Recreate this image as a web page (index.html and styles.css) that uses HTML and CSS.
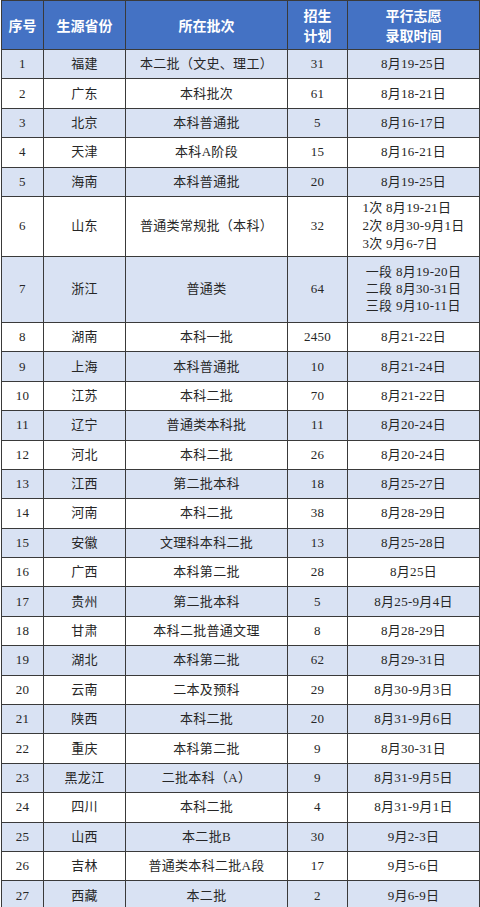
FILE: index.html
```html
<!DOCTYPE html>
<html lang="zh-CN">
<head>
<meta charset="utf-8">
<title>平行志愿录取时间</title>
<link rel="stylesheet" href="styles.css">
</head>
<body>
<table class="plan">
  <colgroup>
    <col class="c-no"><col class="c-prov"><col class="c-batch"><col class="c-num"><col class="c-time">
  </colgroup>
  <thead>
    <tr class="head">
      <th>序号</th><th>生源省份</th><th>所在批次</th><th>招生<br>计划</th><th>平行志愿<br>录取时间</th>
    </tr>
  </thead>
  <tbody>
    <tr class="alt"><td>1</td><td>福建</td><td>本二批（文史、理工）</td><td>31</td><td>8月19-25日</td></tr>
    <tr><td>2</td><td>广东</td><td>本科批次</td><td>61</td><td>8月18-21日</td></tr>
    <tr class="alt"><td>3</td><td>北京</td><td>本科普通批</td><td>5</td><td>8月16-17日</td></tr>
    <tr><td>4</td><td>天津</td><td>本科A阶段</td><td>15</td><td>8月16-21日</td></tr>
    <tr class="alt"><td>5</td><td>海南</td><td>本科普通批</td><td>20</td><td>8月19-25日</td></tr>
    <tr class="tall6"><td>6</td><td>山东</td><td>普通类常规批（本科）</td><td>32</td><td><span class="multi">1次 8月19-21日<br>2次 8月30-9月1日<br>3次 9月6-7日</span></td></tr>
    <tr class="alt tall7"><td>7</td><td>浙江</td><td>普通类</td><td>64</td><td><span class="multi">一段 8月19-20日<br>二段 8月30-31日<br>三段 9月10-11日</span></td></tr>
    <tr><td>8</td><td>湖南</td><td>本科一批</td><td>2450</td><td>8月21-22日</td></tr>
    <tr class="alt"><td>9</td><td>上海</td><td>本科普通批</td><td>10</td><td>8月21-24日</td></tr>
    <tr><td>10</td><td>江苏</td><td>本科二批</td><td>70</td><td>8月21-22日</td></tr>
    <tr class="alt"><td>11</td><td>辽宁</td><td>普通类本科批</td><td>11</td><td>8月20-24日</td></tr>
    <tr><td>12</td><td>河北</td><td>本科二批</td><td>26</td><td>8月20-24日</td></tr>
    <tr class="alt"><td>13</td><td>江西</td><td>第二批本科</td><td>18</td><td>8月25-27日</td></tr>
    <tr><td>14</td><td>河南</td><td>本科二批</td><td>38</td><td>8月28-29日</td></tr>
    <tr class="alt"><td>15</td><td>安徽</td><td>文理科本科二批</td><td>13</td><td>8月25-28日</td></tr>
    <tr><td>16</td><td>广西</td><td>本科第二批</td><td>28</td><td>8月25日</td></tr>
    <tr class="alt"><td>17</td><td>贵州</td><td>第二批本科</td><td>5</td><td>8月25-9月4日</td></tr>
    <tr><td>18</td><td>甘肃</td><td>本科二批普通文理</td><td>8</td><td>8月28-29日</td></tr>
    <tr class="alt"><td>19</td><td>湖北</td><td>本科第二批</td><td>62</td><td>8月29-31日</td></tr>
    <tr><td>20</td><td>云南</td><td>二本及预科</td><td>29</td><td>8月30-9月3日</td></tr>
    <tr class="alt"><td>21</td><td>陕西</td><td>本科二批</td><td>20</td><td>8月31-9月6日</td></tr>
    <tr><td>22</td><td>重庆</td><td>本科第二批</td><td>9</td><td>8月30-31日</td></tr>
    <tr class="alt"><td>23</td><td>黑龙江</td><td>二批本科（A）</td><td>9</td><td>8月31-9月5日</td></tr>
    <tr><td>24</td><td>四川</td><td>本科二批</td><td>4</td><td>8月31-9月1日</td></tr>
    <tr class="alt"><td>25</td><td>山西</td><td>本二批B</td><td>30</td><td>9月2-3日</td></tr>
    <tr><td>26</td><td>吉林</td><td>普通类本科二批A段</td><td>17</td><td>9月5-6日</td></tr>
    <tr class="alt"><td>27</td><td>西藏</td><td>本二批</td><td>2</td><td>9月6-9日</td></tr>
  </tbody>
</table>
</body>
</html>
```
FILE: styles.css
```css
html, body {
  margin: 0;
  padding: 0;
  background: #ffffff;
}
body {
  padding-left: 1px;
  overflow: hidden;
}
.plan {
  border-collapse: collapse;
  table-layout: fixed;
  width: 478px;
  font-family: "Liberation Serif", "Noto Sans CJK SC", serif;
  font-size: 13px;
  color: #262626;
}
.c-no { width: 42px; }
.c-prov { width: 82px; }
.c-batch { width: 162px; }
.c-num { width: 60px; }
.c-time { width: 132px; }
.plan th, .plan td {
  border: 1px solid #3a3a3a;
  text-align: center;
  vertical-align: middle;
  padding: 0;
  white-space: nowrap;
}
.plan th {
  background: #4472c4;
  color: #ffffff;
  font-family: "Noto Sans CJK SC", "Noto Sans", sans-serif;
  font-weight: 700;
  font-size: 14px;
  line-height: 20px;
}
.head { height: 49px; }
.plan tbody tr { height: 29.4px; }
.plan tbody tr.alt { background: #d9e2f3; }
.plan tbody td { line-height: 18px; letter-spacing: 0.3px; }
.plan tbody tr.tall6 { height: 60px; }
.plan tbody tr.tall7 { height: 66px; }
.multi {
  display: inline-block;
  text-align: left;
  line-height: 18px;
}
.tall7 .multi { line-height: 17px; }
```
